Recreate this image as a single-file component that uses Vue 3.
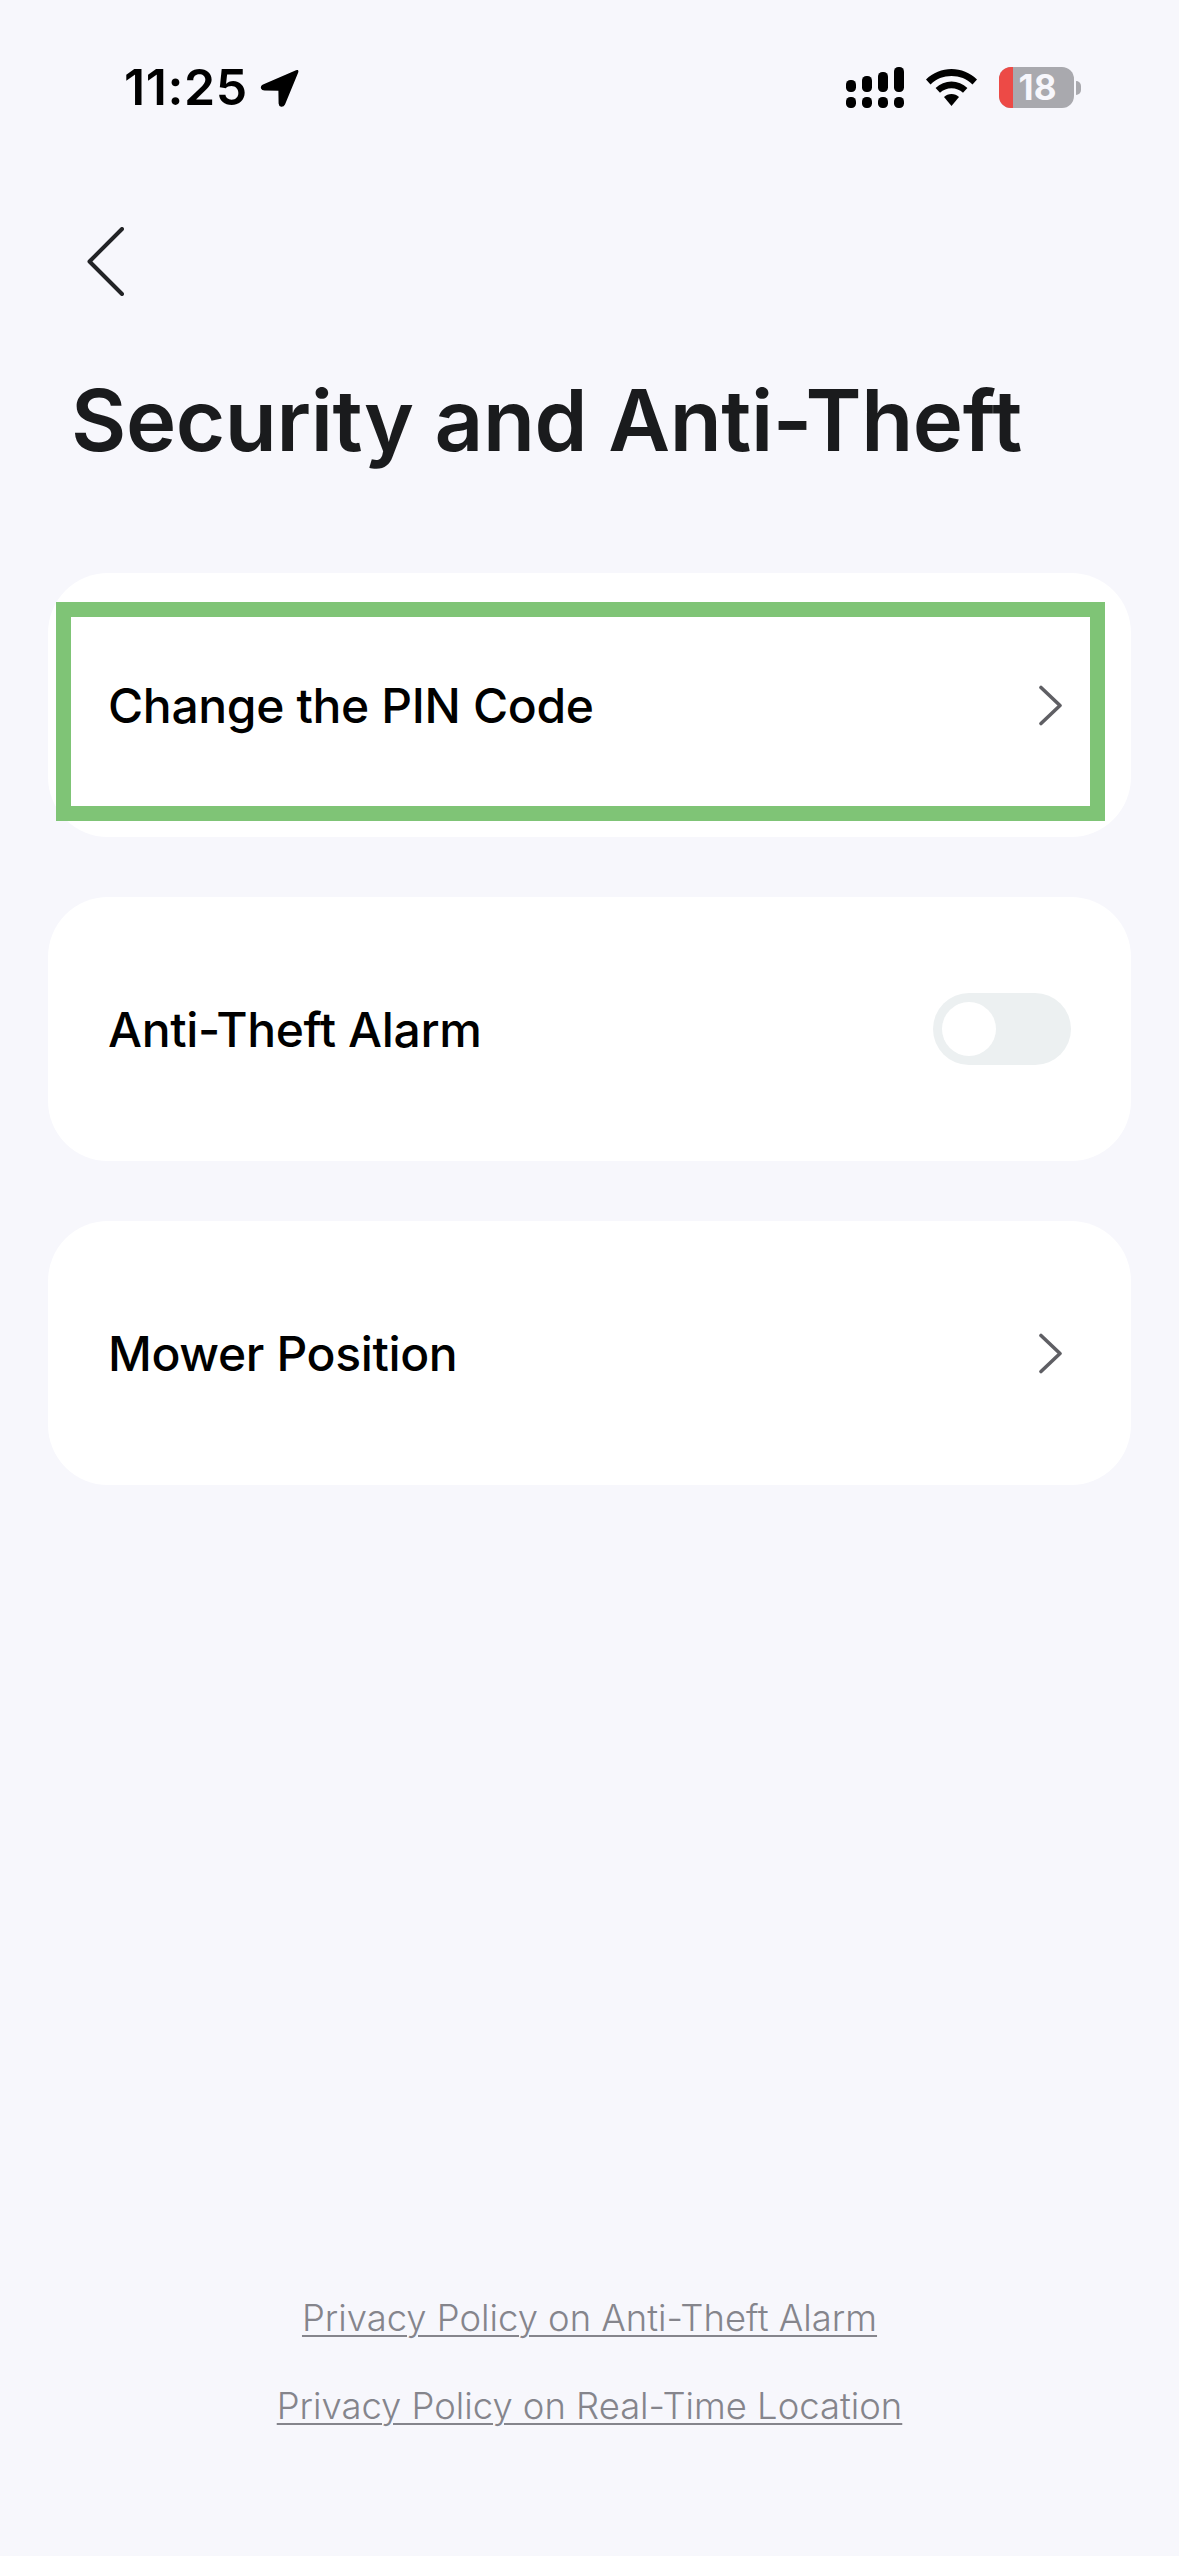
<template>
  <div class="page">
    <!-- status bar -->
    <div class="status-bar">
      <div class="status-left">
        <span class="time">11:25</span>
        <svg class="arrow" width="39" height="38" viewBox="0 0 39 38">
          <path d="M36 1.2 L3 15.5 Q0.2 17 1 19.5 Q1.8 21.6 4.5 21.6 L18.4 21.8 L18.6 34.5 Q18.8 37.4 21.2 37.8 Q23.8 38 25 35.4 L38.2 3.6 Q38.9 1.6 37.8 1 Q37 0.7 36 1.2 Z" fill="#000" />
        </svg>
      </div>
      <div class="status-right">
        <svg width="58" height="41" viewBox="0 0 58 41">
          <rect x="0" y="13" width="10" height="12" rx="4.5" />
          <rect x="16" y="9" width="10" height="16" rx="4.5" />
          <rect x="32" y="5" width="10" height="20" rx="4.5" />
          <rect x="48" y="0" width="10" height="25" rx="4.5" />
          <rect x="0" y="30" width="10" height="11" rx="4.5" />
          <rect x="16" y="30" width="10" height="11" rx="4.5" />
          <rect x="32" y="30" width="10" height="11" rx="4.5" />
          <rect x="48" y="30" width="10" height="11" rx="4.5" />
        </svg>
        <svg class="wifi" width="51" height="37" viewBox="0 0 51 37">
          <path d="M25.5 0 C35 0 44 3.6 51 10.5 L46.5 15.5 C40.8 9.8 33.4 7 25.5 7 C17.6 7 10.2 9.8 4.5 15.5 L0 10.5 C7 3.6 16 0 25.5 0 Z" />
          <path d="M25.5 12.5 C31.5 12.5 37 14.8 41.4 19 L37 23.8 C33.8 20.8 29.8 19.3 25.5 19.3 C21.2 19.3 17.2 20.8 14 23.8 L9.6 19 C14 14.8 19.5 12.5 25.5 12.5 Z" />
          <path d="M25.5 25 C28.4 25 31 26 33 28 L25.5 37 L18 28 C20 26 22.6 25 25.5 25 Z" />
        </svg>
        <div class="battery">
          <div class="battery-body">
            <div class="battery-level"></div>
            <span class="battery-text">18</span>
          </div>
          <div class="battery-nub"></div>
        </div>
      </div>
    </div>

    <button class="back" type="button">
      <svg width="37" height="69" viewBox="0 0 37 69">
        <path d="M35 2 L2.5 34.5 L35 67" fill="none" stroke="#222326" stroke-width="4" stroke-linecap="round" stroke-linejoin="round" />
      </svg>
    </button>

    <h1 class="title">Security and Anti-Theft</h1>

    <div class="list">
      <div v-for="item in items" :key="item.name" class="card">
        <span class="card-name">{{ item.name }}</span>
        <div v-if="item.toggle" class="toggle">
          <div class="knob"></div>
        </div>
        <svg v-else class="chevron" width="25" height="41" viewBox="0 0 25 41">
          <path d="M3 2.5 L22 20.5 L3 38.5" fill="none" stroke="#5f5f64" stroke-width="3.6" stroke-linecap="round" stroke-linejoin="round" />
        </svg>
        <div v-if="item.marked" class="highlight"></div>
      </div>
    </div>

    <div class="links">
      <a class="link">Privacy Policy on Anti-Theft Alarm</a>
      <a class="link">Privacy Policy on Real-Time Location</a>
    </div>
  </div>
</template>

<script setup>
const items = [
  { name: 'Change the PIN Code', marked: true },
  { name: 'Anti-Theft Alarm', toggle: true },
  { name: 'Mower Position' }
];
</script>

<style>
html, body {
  margin: 0;
  background: #f7f7fc;
}
</style>

<style scoped>
.page {
  width: 1179px;
  height: 2556px;
  background: #f7f7fc;
  font-family: Inter, "Liberation Sans", sans-serif;
  color: #000;
  display: flex;
  flex-direction: column;
  box-sizing: border-box;
  overflow: hidden;
}

.status-bar {
  display: flex;
  justify-content: space-between;
  align-items: flex-start;
  padding: 67px 98px 0 124px;
  height: 41px;
}

.status-left {
  display: flex;
  align-items: center;
  gap: 12px;
  height: 41px;
}

.time {
  font-size: 50px;
  font-weight: 600;
  line-height: 41px;
  letter-spacing: 0.6px;
}

.status-right {
  display: flex;
  align-items: center;
  gap: 22px;
  height: 41px;
}

.battery {
  display: flex;
  align-items: center;
  gap: 2px;
}

.battery-body {
  position: relative;
  width: 75px;
  height: 41px;
  border-radius: 12px;
  background: #a9a9ae;
  overflow: hidden;
  display: flex;
  align-items: center;
  justify-content: center;
}

.battery-level {
  position: absolute;
  left: 0;
  top: 0;
  bottom: 0;
  width: 14px;
  background: #ed4a46;
}

.battery-text {
  position: relative;
  font-size: 35px;
  font-weight: 700;
  color: #f7f7fc;
  line-height: 41px;
  margin-left: 2px;
}

.battery-nub {
  width: 5px;
  height: 14px;
  background: #a9a9ae;
  border-radius: 0 7px 7px 0;
}

.back {
  border: none;
  background: none;
  padding: 0;
  margin: 119px 0 0 87px;
  width: 37px;
  height: 69px;
  display: block;
}

.back svg {
  display: block;
}

.title {
  margin: 73px 0 0 71px;
  font-size: 85px;
  line-height: 104px;
  font-weight: 600;
  color: #1a1b1d;
  letter-spacing: -0.4px;
  white-space: nowrap;
}

.list {
  display: flex;
  flex-direction: column;
  gap: 60px;
  margin: 100px 48px 0;
}

.card {
  position: relative;
  display: flex;
  align-items: center;
  justify-content: space-between;
  height: 264px;
  border-radius: 60px;
  background: #fff;
  padding: 0 60px 0 60px;
  box-sizing: border-box;
}

.card-name {
  font-size: 48px;
  font-weight: 500;
  letter-spacing: -0.35px;
  color: #000;
}

.chevron {
  margin-right: 8px;
}

.toggle {
  width: 138px;
  height: 72px;
  border-radius: 36px;
  background: #ecf0f1;
  padding: 9px;
  box-sizing: border-box;
}

.knob {
  width: 54px;
  height: 54px;
  border-radius: 50%;
  background: #fff;
}

.highlight {
  position: absolute;
  left: 8px;
  top: 29px;
  width: 1049px;
  height: 219px;
  border: 15px solid #7fc476;
  box-sizing: border-box;
}

.links {
  margin-top: auto;
  padding-bottom: 129px;
  display: flex;
  flex-direction: column;
  align-items: center;
  gap: 47px;
}

.link {
  font-size: 36.4px;
  line-height: 41px;
  font-weight: 300;
  color: #85858c;
  text-decoration: underline;
  text-decoration-thickness: 2px;
  text-underline-offset: 4px;
}
</style>
